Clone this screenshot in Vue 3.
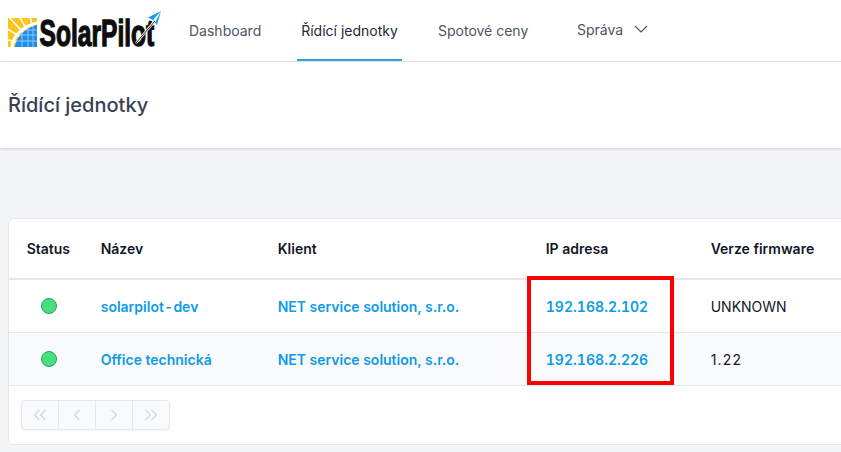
<script setup>
const rows = [
  { name: ['solarpilot', 'dev'], client: 'NET service solution, s.r.o.', ip: '192.168.2.102', fw: 'UNKNOWN' },
  { name: ['Office technická'], client: 'NET service solution, s.r.o.', ip: '192.168.2.226', fw: '1.22' },
]
</script>

<template>
  <div class="page">
    <header class="nav">
      <div class="logo">
        <svg width="165" height="50" viewBox="0 0 165 50">
          <defs>
            <clipPath id="sq"><rect x="8" y="18" width="29" height="29" /></clipPath>
          </defs>
          <g clip-path="url(#sq)">
            <rect x="8" y="18" width="29" height="29" fill="#f9c51f" />
            <path d="M37 47 L6 14 M37 47 L19 16 M37 47 L30 16 M37 47 L4 27 M37 47 L4 39" stroke="#fff" stroke-width="1.5" />
            <path d="M12 47 C13 36 23 26 37 23" fill="none" stroke="#fff" stroke-width="3" />
            <path d="M15 47 C16 37 25 28 37 25 L37 47 Z" fill="#1d8fe6" />
            <path d="M22 33 L22 47 M28 28 L28 47 M33 26 L33 47 M16 41 L37 41 M20 35 L37 35 M25 30 L37 30" stroke="#a9d6f7" stroke-width="0.8" />
          </g>
          <text class="logo-text" transform="translate(39.5 46) scale(0.665 1)">SolarPilot</text>
          <path d="M136 43 L154 22" stroke="#fff" stroke-width="2.4" />
          <path d="M136 43 L155 21" stroke="#222" stroke-width="1" />
          <path d="M161 11 L148 17.5 L152 19.5 L155 22.5 Z M153 20 L161 11 L157 25 Z" fill="#1e9be0" />
        </svg>
      </div>
      <nav class="links">
        <a class="link l-dash">Dashboard</a>
        <a class="link l-act active">Řídící jednotky</a>
        <a class="link l-spot">Spotové ceny</a>
        <a class="link l-spr">Správa
          <svg class="chev" width="14" height="8" viewBox="0 0 14 8"><path d="M1 1 L7 7 L13 1" fill="none" stroke="#4b5563" stroke-width="1.2" /></svg>
        </a>
      </nav>
    </header>

    <section class="title"><h1>Řídící jednotky</h1></section>

    <main class="body">
      <div class="card">
        <table>
          <colgroup>
            <col style="width:74px" /><col style="width:177px" /><col style="width:268px" /><col style="width:165px" /><col />
          </colgroup>
          <thead>
            <tr><th>Status</th><th>Název</th><th>Klient</th><th>IP adresa</th><th>Verze firmware</th></tr>
          </thead>
          <tbody>
            <tr v-for="r in rows" :key="r.ip">
              <td><span class="dot"></span></td>
              <td class="lnk"><template v-for="(part, i) in r.name" :key="part"><span v-if="i" class="hy">-</span>{{ part }}</template></td>
              <td class="lnk">{{ r.client }}</td>
              <td class="lnk ip">{{ r.ip }}</td>
              <td class="fw">{{ r.fw }}</td>
            </tr>
          </tbody>
        </table>
        <div class="foot">
          <div class="pager">
            <button><svg width="14" height="12" viewBox="0 0 14 12"><path d="M6.5 1 L1.5 6 L6.5 11 M12.5 1 L7.5 6 L12.5 11" /></svg></button>
            <button><svg width="8" height="12" viewBox="0 0 8 12"><path d="M6.5 1 L1.5 6 L6.5 11" /></svg></button>
            <button><svg width="8" height="12" viewBox="0 0 8 12"><path d="M1.5 1 L6.5 6 L1.5 11" /></svg></button>
            <button><svg width="14" height="12" viewBox="0 0 14 12"><path d="M1.5 1 L6.5 6 L1.5 11 M7.5 1 L12.5 6 L7.5 11" /></svg></button>
          </div>
        </div>
      </div>
    </main>

    <div class="mark"></div>
  </div>
</template>

<style>
html, body { margin: 0; background: #f3f4f6; overflow: hidden; }
</style>

<style scoped>
.page {
  position: relative;
  width: 841px;
  height: 452px;
  overflow: hidden;
  background: #f3f4f6;
  font-family: Inter, "Noto Sans", sans-serif;
  font-size: 14px;
  color: #111827;
}
.nav {
  display: flex;
  height: 61px;
  background: #fff;
  border-bottom: 1px solid #e5e7eb;
}
.logo { width: 181px; height: 61px; flex: none; }
.logo svg { display: block; overflow: visible; }
.logo-text {
  font-family: "Liberation Sans", sans-serif;
  font-weight: 700;
  font-size: 37px;
  fill: #0d0d0d;
  stroke: #0d0d0d;
  stroke-width: 1.3;
}
.links { display: flex; height: 61px; }
.link {
  display: flex;
  align-items: center;
  box-sizing: border-box;
  height: 61px;
  color: #4b5563;
}
.l-dash { width: 80px; margin-left: 5px; margin-right: 31px; padding-left: 3px; }
.l-act { width: 105px; margin-right: 32px; color: #1f2937; border-bottom: 2px solid #2ea3dc; padding-top: 2px; justify-content: center; }
.l-spot { width: 100px; margin-right: 36px; padding-left: 4px; }
.l-spr { padding: 0 0 2px 7px; gap: 8px; }
.chev { margin-top: -1px; margin-left: 3px; }
.title {
  height: 86px;
  box-sizing: border-box;
  background: #fff;
  padding: 29px 8px 0;
  box-shadow: 0 1px 3px rgba(0, 0, 0, 0.14);
  position: relative;
}
h1 {
  margin: 0;
  font-size: 20px;
  line-height: 28px;
  font-weight: 500;
  color: #374151;
}
.body { padding: 70px 0 0 8px; }
.card {
  box-sizing: border-box;
  width: 860px;
  height: 227px;
  background: #fff;
  border: 1px solid #e5e7eb;
  border-radius: 6px;
  overflow: hidden;
}
table { border-collapse: collapse; table-layout: fixed; width: 860px; margin-left: -0.3px; }
th {
  height: 60px;
  padding: 0 0 0 18px;
  text-align: left;
  font-size: 14px;
  font-weight: 600;
  color: #111827;
  border-bottom: 2px solid #e5e7eb;
  box-sizing: border-box;
}
td {
  height: 53px;
  box-sizing: border-box;
  padding: 2px 0 0 18px;
  font-size: 14px;
  border-bottom: 1px solid #e5e7eb;
}
tbody tr:nth-child(2) { background: #f9fafb; }
.lnk { color: #0e9be6; font-weight: 600; }
.hy { margin: 0 1.5px; }
.ip { font-variant-numeric: tabular-nums; letter-spacing: 0.05px; }
.fw { color: #111827; }
tr:nth-child(2) .fw { letter-spacing: 1.2px; }
.dot {
  display: block;
  box-sizing: border-box;
  width: 16px;
  height: 16px;
  margin: -2px 0 0 14px;
  border-radius: 50%;
  background: #4ade80;
  border: 1px solid #22a559;
}
.foot { padding: 14px 12px; }
.pager {
  display: inline-flex;
  height: 30px;
  box-sizing: border-box;
  border: 1px solid #e5e7eb;
  border-radius: 4px;
  background: #f9fafb;
  box-shadow: 0 1px 1px rgba(0, 0, 0, 0.04);
}
.pager button {
  width: 37px;
  padding: 0;
  border: 0;
  border-right: 1px solid #e5e7eb;
  background: transparent;
  display: flex;
  align-items: center;
  justify-content: center;
}
.pager button:last-child { border-right: 0; width: 36px; }
.pager path { fill: none; stroke: #d1d5db; stroke-width: 1.2; }
.mark {
  position: absolute;
  left: 527px;
  top: 276px;
  width: 147px;
  height: 109px;
  box-sizing: border-box;
  border: 4px solid #f00;
}
</style>
